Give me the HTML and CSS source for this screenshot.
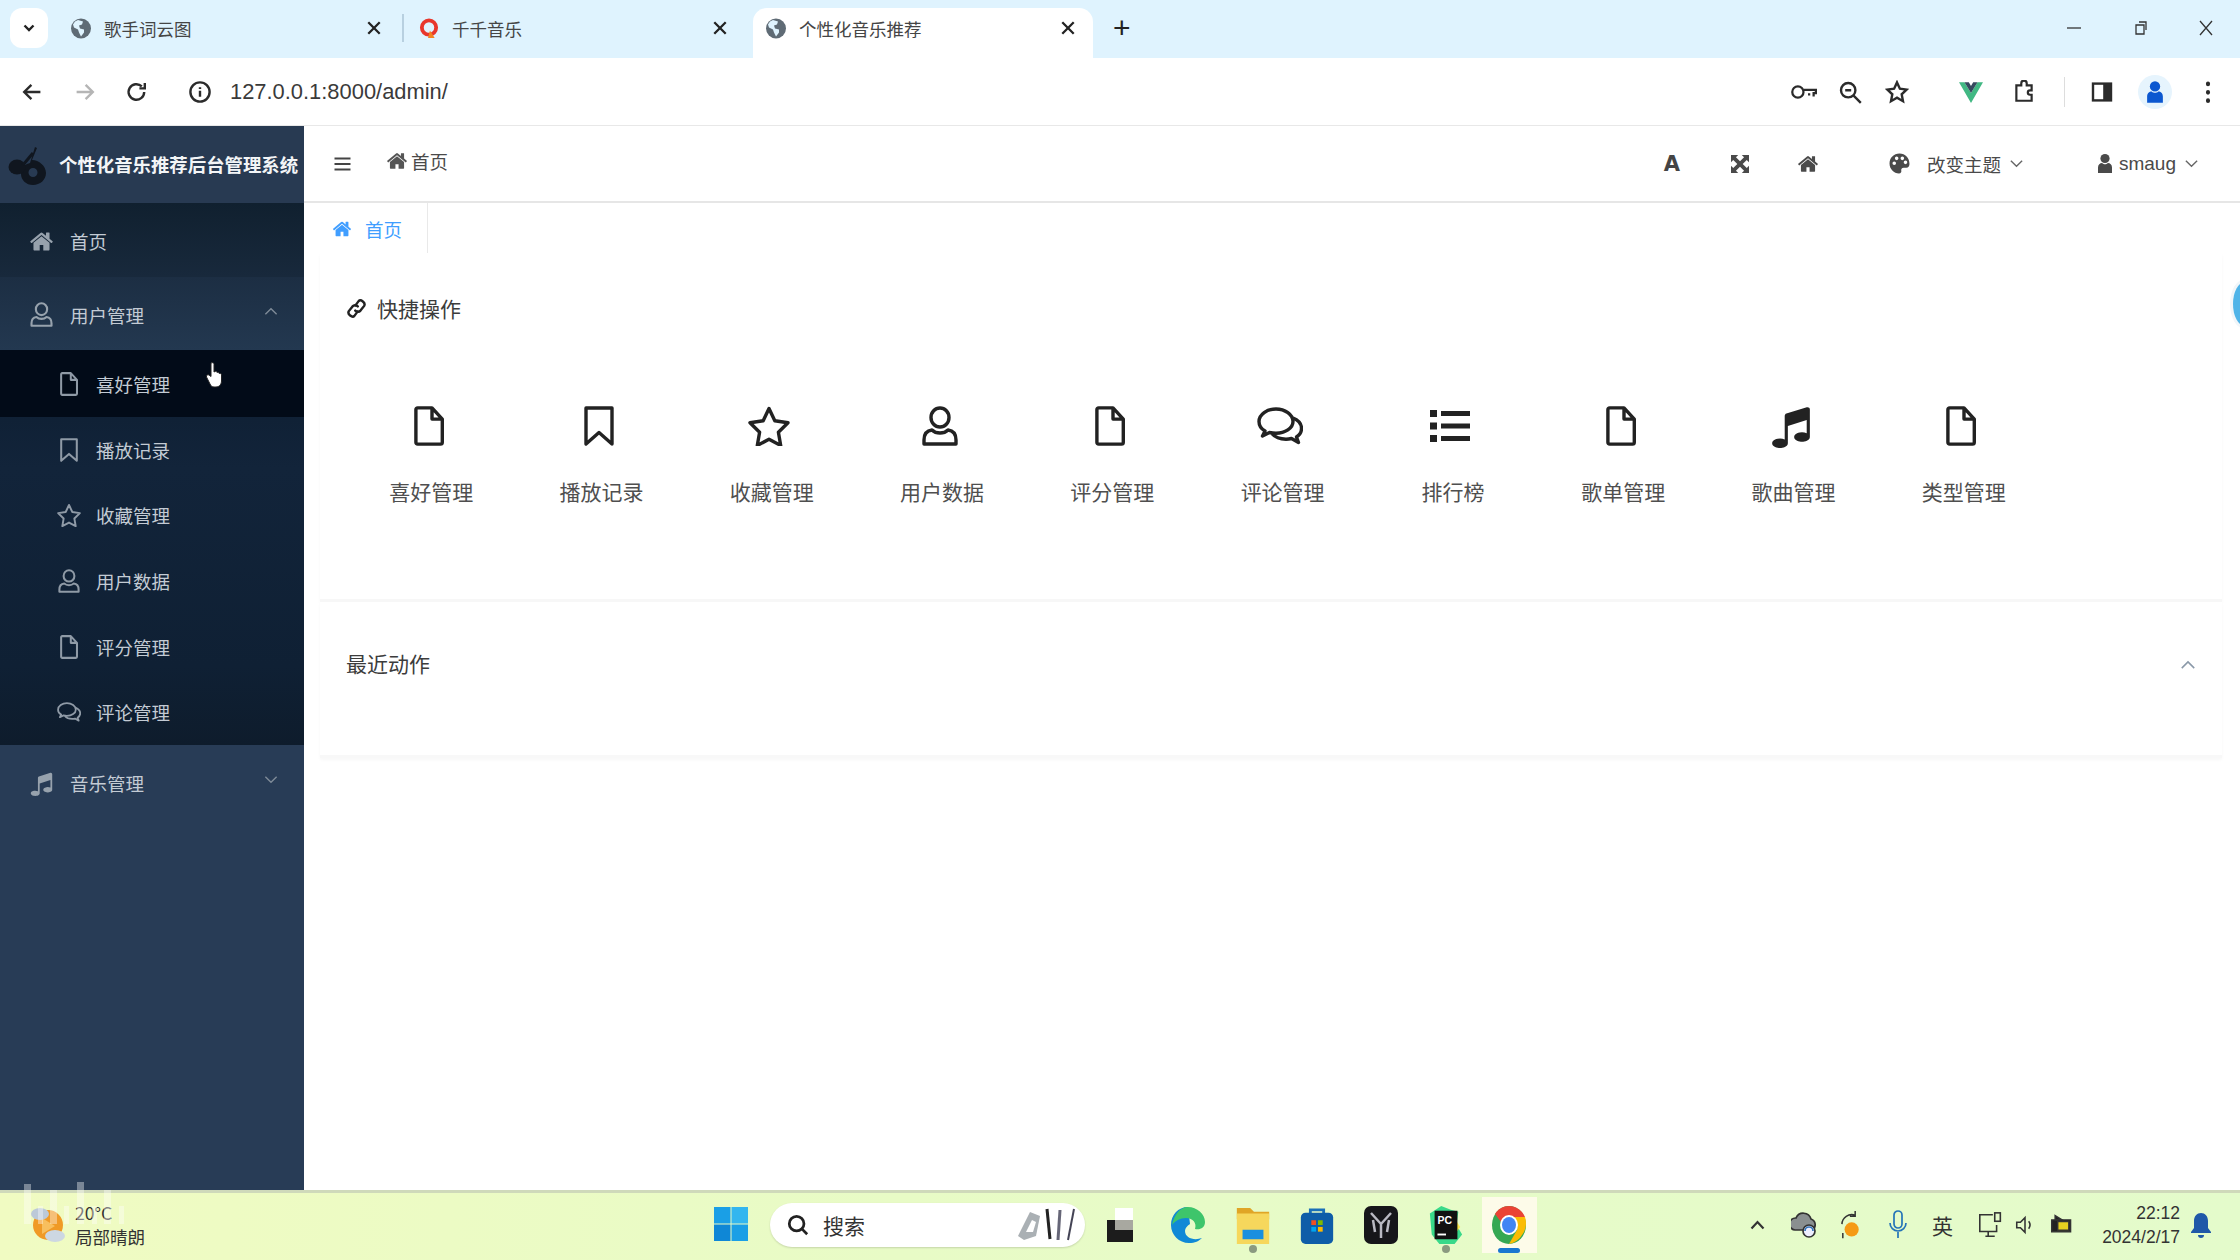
FILE: index.html
```html
<!DOCTYPE html>
<html lang="zh-CN">
<head>
<meta charset="utf-8">
<title>个性化音乐推荐</title>
<link rel="stylesheet" href="styles.css">
</head>
<body>
<svg class="defs" aria-hidden="true">
  <symbol id="i-home" viewBox="0 0 1792 1792"><path fill="currentColor" d="M1472 992v480q0 26-19 45t-45 19h-384v-384h-256v384h-384q-26 0-45-19t-19-45v-480q0-1 .5-3t.5-3l575-474 575 474q1 2 1 6zm223-69l-62 74q-8 9-21 11h-3q-13 0-21-7l-692-577-692 577q-12 8-24 7-13-2-21-11l-62-74q-8-10-7-23.500t11-21.500l719-599q32-26 76-26t76 26l244 204v-195q0-14 9-23t23-9h192q14 0 23 9t9 23v408l219 182q10 8 11 21.500t-7 23.500z"/></symbol>
  <symbol id="i-music" viewBox="0 0 1792 1792"><path fill="currentColor" d="M1664 224v1120q0 50-34 89t-86 60.500-103.500 32-96.500 10.500-96.500-10.500-103.500-32-86-60.500-34-89 34-89 86-60.500 103.500-32 96.500-10.500q105 0 192 39v-537l-768 237v709q0 50-34 89t-86 60.500-103.500 32-96.500 10.500-96.500-10.500-103.500-32-86-60.500-34-89 34-89 86-60.500 103.500-32 96.500-10.500q105 0 192 39v-967q0-31 19-56.500t49-35.500l832-256q12-4 28-4 40 0 68 28t28 68z"/></symbol>
  <symbol id="i-file" viewBox="0 0 30 40"><path fill="none" stroke="currentColor" stroke-width="3.4" stroke-linejoin="round" d="M3.700 1.900h14.300l10.300 11.200v23.200q0 1.800-1.800 1.800H3.700q-1.800 0-1.800-1.800V3.700q0-1.800 1.800-1.800zM18 1.900v11.200h10.300"/></symbol>
  <symbol id="i-bookmark" viewBox="0 0 30 40"><path fill="none" stroke="currentColor" stroke-width="3.400" stroke-linejoin="round" d="M2 2h26v36l-13-11.500L2 38z"/></symbol>
  <symbol id="i-star" viewBox="0 0 42 40"><path fill="none" stroke="currentColor" stroke-width="3.400" stroke-linejoin="round" d="M21 2.500l5.800 12.300 13.200 1.900-9.600 9.500 2.300 13.300L21 33.200 9.300 39.500l2.300-13.300L2 16.700l13.200-1.900z"/></symbol>
  <symbol id="i-user" viewBox="0 0 36 40"><g fill="none" stroke="currentColor" stroke-width="3.400"><ellipse cx="18" cy="11.500" rx="9" ry="9.500"/><path stroke-linejoin="round" d="M10 24q-8 1-8 10v4h32v-4q0-9-8-10-3 3-8 3t-8-3z"/></g></symbol>
  <symbol id="i-comments" viewBox="0 0 46 40"><g fill="none" stroke="currentColor" stroke-width="3.400" stroke-linejoin="round"><path d="M19 3C10 3 2 8.500 2 15.500c0 4 2.500 7.500 6 9.500l-2.500 5 7-3.500c2 .5 4 .8 6.500 .8 9 0 17-5 17-11.800S28 3 19 3z"/><path d="M36 12c5 2 8.500 5.800 8.500 10.500 0 3.500-2 6.500-5 8.500l2 5.500-7-4c-2 .5-3.500 .7-5.500 .7-6 0-11-2-14-5.500"/></g></symbol>
  <symbol id="i-list" viewBox="0 0 40 32"><path fill="currentColor" d="M0 0h7v7H0zM11 1h29v5H11zM0 12.500h7v7H0zM11 13.500h29v5H11zM0 25h7v7H0zM11 26h29v5H11z"/></symbol>
  <symbol id="i-link" viewBox="0 0 20 20"><g fill="none" stroke="currentColor" stroke-width="2.300" stroke-linecap="round"><path d="M9 7l3-4c2-2.200 7 1.500 5.300 4.500l-3.500 4.500c-1.500 1.700-3.800 1.200-5 0"/><path d="M11 13l-3 4c-2 2.200-7-1.500-5.300-4.500L6.200 8c1.500-1.700 3.800-1.200 5 0"/></g></symbol>
  <symbol id="i-expand" viewBox="0 0 20 20"><path fill="currentColor" d="M0 0h8L5.500 2.500 10 7l4.500-4.500L12 0h8v8l-2.500-2.500L13 10l4.500 4.500L20 12v8h-8l2.500-2.500L10 13l-4.500 4.500L8 20H0v-8l2.500 2.500L7 10 2.500 5.500 0 8z"/></symbol>
  <symbol id="i-palette" viewBox="0 0 20 20"><path fill="currentColor" fill-rule="evenodd" d="M10 .5C4.500 .5 .5 4.700 .5 10s4.200 9.500 9 9.500c1.800 0 2.500-1.200 2.200-2.500-.4-1.500.4-3 2.300-3h2.500c1.800 0 3-1.300 3-3.500C19.500 4.500 15.500 .5 10 .5zM5 11.500a1.700 1.700 0 1 1 0-3.400 1.700 1.700 0 0 1 0 3.400zm2.300-4.700a1.700 1.700 0 1 1 0-3.400 1.700 1.700 0 0 1 0 3.400zm5.400 0a1.700 1.700 0 1 1 0-3.400 1.700 1.700 0 0 1 0 3.400zm3 3.800a1.700 1.700 0 1 1 0-3.400 1.700 1.700 0 0 1 0 3.400z"/></symbol>
  <symbol id="i-person" viewBox="0 0 16 20"><circle cx="8" cy="5" r="4.600" fill="currentColor"/><path fill="currentColor" d="M1 19.500v-5.500c0-3 2-4.500 4-4.500 1 1 2 1.200 3 1.200s2-.2 3-1.200c2 0 4 1.500 4 4.500v5.500z"/></symbol>
  <symbol id="i-globe" viewBox="0 0 20 20"><circle cx="10" cy="10" r="10" fill="#5f6b75"/><path fill="#dff3fe" d="M7 1.500l5 1.500-1 3-3 1 1 3 4 1v3l-3 4-2-4-1-3-4-2-1-3 2-3z"/></symbol>
</svg>

<header class="tabstrip">
  <button class="tab-search"><svg class="chev" viewBox="0 0 12 8"><path d="M1.500 1.500L6 6l4.500-4.500"/></svg></button>
  <div class="tab tab-first"><svg class="tab-ico"><use href="#i-globe"/></svg><span class="tab-title">歌手词云图</span><svg class="tab-x" viewBox="0 0 14 14"><path d="M2 2l10 10M12 2L2 12"/></svg></div>
  <i class="tab-sep"></i>
  <div class="tab tab-second">
    <svg class="tab-ico" viewBox="0 0 20 22"><circle cx="10" cy="10" r="7.500" fill="none" stroke="#e8362c" stroke-width="4"/><path d="M11 13l5 8h-7z" fill="#f58220"/></svg>
    <span class="tab-title">千千音乐</span><svg class="tab-x" viewBox="0 0 14 14"><path d="M2 2l10 10M12 2L2 12"/></svg></div>
  <div class="tab tab-active"><svg class="tab-ico"><use href="#i-globe"/></svg><span class="tab-title">个性化音乐推荐</span><svg class="tab-x" viewBox="0 0 14 14"><path d="M2 2l10 10M12 2L2 12"/></svg></div>
  <span class="tab-new">+</span>
  <div class="winctl">
    <svg class="win-min" viewBox="0 0 16 16"><path d="M1 8h14"/></svg>
    <svg viewBox="0 0 16 16"><path d="M3 5h8v9H3zM6 2h7v8"/></svg>
    <svg viewBox="0 0 16 16"><path d="M2 1l12 14M14 1L2 15"/></svg>
  </div>
</header>

<nav class="toolbar">
  <span class="tb"><svg viewBox="0 0 20 20"><path d="M17 10H4M9.500 4L3.500 10l6 6"/></svg></span>
  <span class="tb tb-off"><svg viewBox="0 0 20 20"><path d="M3 10h13M10.500 4l6 6-6 6"/></svg></span>
  <span class="tb"><svg viewBox="0 0 20 20"><path d="M16 10a6.500 6.500 0 1 1-2-4.700M16.500 2.500v4.500H12"/></svg></span>
  <span class="tb tb-info"><svg viewBox="0 0 20 20"><circle cx="10" cy="10" r="8"/><path d="M10 9v5M10 6v1.500"/></svg></span>
  <span class="url">127.0.0.1:8000/admin/</span>
  <div class="tb-right">
    <span class="tb tb-key"><svg viewBox="0 0 24 20"><circle cx="7" cy="10" r="5"/><path d="M12 8h11v3h-2v3M17 11v2"/></svg></span>
    <span class="tb tb-tight"><svg viewBox="0 0 20 20"><circle cx="8.500" cy="8.500" r="6"/><path d="M13 13l6 6M6 8.500h5"/></svg></span>
    <span class="tb tb-tight"><svg viewBox="0 0 20 20"><path d="M10 2l2.400 5.300 5.600 .7-4.100 3.900 1.100 5.800-5-2.900-5 2.900 1.100-5.800L2 8l5.600-.7z"/></svg></span>
    <span class="tb tb-vue"><svg viewBox="0 0 22 20"><path fill="#41b883" stroke="none" d="M0 1h5l6 10 6-10h5L11 20z"/><path fill="#35495e" stroke="none" d="M5 1h4l2 3.500L13 1h4l-6 10z"/></svg></span>
    <span class="tb tb-near"><svg viewBox="0 0 20 22"><path d="M3 5h4.500V3a2.500 2.500 0 0 1 5 0v2H17v4.500h-1.500a2 2 0 0 0 0 4H17V19H3z"/></svg></span>
    <i class="tb-sep"></i>
    <span class="tb tb-panel"><svg viewBox="0 0 20 20"><rect x="2.500" y="3" width="15" height="14" /><path class="solid" d="M11 3h6.500v14H11z"/></svg></span>
    <span class="tb tb-near"><span class="avatar"><svg viewBox="0 0 16 20"><use href="#i-person"/></svg></span></span>
    <span class="tb tb-near"><svg viewBox="0 0 20 20"><path class="dots" d="M10 3v.5M10 10v.5M10 17v.5"/></svg></span>
  </div>
</nav>

<div class="app">
  <aside class="sidebar">
    <div class="brand">
      <svg class="brand-logo" viewBox="0 0 38 38"><path fill="#10161f" fill-rule="evenodd" d="M27 0l2 1-5 12c7 0 14 6 14 13 0 7-6 12-13 12s-12-5-12-11c0-4 2-8 6-10l3-1zM25 21a4.500 4.500 0 1 0 0 9 4.500 4.500 0 0 0 0-9z"/><ellipse cx="9" cy="20" rx="8.500" ry="7.500" fill="#10161f"/><path stroke="#10161f" stroke-width="3" d="M15 18l10-12"/></svg>
      <span class="brand-title">个性化音乐推荐后台管理系统</span>
    </div>
    <a class="menu menu-home"><svg class="m-ico"><use href="#i-home"/></svg><span>首页</span></a>
    <a class="menu menu-open"><svg class="m-ico"><use href="#i-user"/></svg><span>用户管理</span><svg class="m-arrow" viewBox="0 0 12 8"><path d="M1 6.500L6 1.500l5 5"/></svg></a>
    <div class="submenu">
      <a class="sub sub-active"><svg class="s-ico"><use href="#i-file"/></svg><span>喜好管理</span></a>
      <a class="sub"><svg class="s-ico"><use href="#i-bookmark"/></svg><span>播放记录</span></a>
      <a class="sub"><svg class="s-ico"><use href="#i-star"/></svg><span>收藏管理</span></a>
      <a class="sub"><svg class="s-ico"><use href="#i-user"/></svg><span>用户数据</span></a>
      <a class="sub"><svg class="s-ico"><use href="#i-file"/></svg><span>评分管理</span></a>
      <a class="sub"><svg class="s-ico"><use href="#i-comments"/></svg><span>评论管理</span></a>
    </div>
    <a class="menu menu-music"><svg class="m-ico"><use href="#i-music"/></svg><span>音乐管理</span><svg class="m-arrow" viewBox="0 0 12 8"><path d="M1 1.500L6 6.500l5-5"/></svg></a>
  </aside>

  <div class="main">
    <div class="navbar">
      <svg class="burger" viewBox="0 0 16 14"><path d="M0 1.500h16M0 7h16M0 12.500h16"/></svg>
      <div class="crumb"><svg class="crumb-ico"><use href="#i-home"/></svg><span>首页</span></div>
      <div class="nav-right">
        <span class="nav-a">A</span>
        <svg class="nav-ico nav-expand"><use href="#i-expand"/></svg>
        <svg class="nav-ico nav-home"><use href="#i-home"/></svg>
        <svg class="nav-ico nav-palette"><use href="#i-palette"/></svg>
        <span class="nav-text nav-theme">改变主题</span>
        <svg class="nav-chev" viewBox="0 0 12 8"><path d="M1 1.500L6 6.500l5-5"/></svg>
        <svg class="nav-person"><use href="#i-person"/></svg>
        <span class="nav-text nav-user">smaug</span>
        <svg class="nav-chev" viewBox="0 0 12 8"><path d="M1 1.500L6 6.500l5-5"/></svg>
      </div>
    </div>
    <div class="tagsbar"><div class="tag"><svg class="tag-ico"><use href="#i-home"/></svg><span>首页</span></div></div>

    <section class="card card-quick">
      <h2 class="card-title"><svg class="title-ico"><use href="#i-link"/></svg>快捷操作</h2>
      <div class="shortcuts">
        <a class="sc"><svg class="sc-ico w30"><use href="#i-file"/></svg><span>喜好管理</span></a>
        <a class="sc"><svg class="sc-ico w30"><use href="#i-bookmark"/></svg><span>播放记录</span></a>
        <a class="sc"><svg class="sc-ico w42"><use href="#i-star"/></svg><span>收藏管理</span></a>
        <a class="sc"><svg class="sc-ico w36"><use href="#i-user"/></svg><span>用户数据</span></a>
        <a class="sc"><svg class="sc-ico w30"><use href="#i-file"/></svg><span>评分管理</span></a>
        <a class="sc"><svg class="sc-ico w46"><use href="#i-comments"/></svg><span>评论管理</span></a>
        <a class="sc"><svg class="sc-ico w40"><use href="#i-list"/></svg><span>排行榜</span></a>
        <a class="sc"><svg class="sc-ico w30"><use href="#i-file"/></svg><span>歌单管理</span></a>
        <a class="sc"><svg class="sc-ico w40 music"><use href="#i-music"/></svg><span>歌曲管理</span></a>
        <a class="sc"><svg class="sc-ico w30"><use href="#i-file"/></svg><span>类型管理</span></a>
      </div>
    </section>
    <section class="card card-recent">
      <h2 class="card-title">最近动作</h2>
      <svg class="card-chev" viewBox="0 0 12 8"><path d="M1 6.500L6 1.500l5 5"/></svg>
    </section>
    <div class="edge-dot"></div>
  </div>
</div>

<svg class="cursor" viewBox="0 0 20 28"><path fill="#fff" stroke="#222" stroke-width="1" d="M6 2c1.500-1 3 0 3 1.500V11l1-.5c1-.5 2 0 2 1 1-.5 2 0 2.200 1 1-.5 2.300 0 2.300 1.500v6c0 3-2 6-5.500 6H9c-2 0-3-1-4-3L1.500 16c-.5-1.500 1-3 2.500-2L6 15.500z"/></svg>

<footer class="taskbar">
  <div class="weather">
    <svg class="weather-ico" viewBox="0 0 36 40"><circle cx="18" cy="20" r="15" fill="#f09a26"/><path fill="#f8bf5e" d="M12 13l13 8-13 8z"/><ellipse cx="10" cy="9" rx="9" ry="6" fill="#bcc9d8"/><ellipse cx="25" cy="31" rx="10" ry="6" fill="#cdd7e2"/></svg>
    <div class="weather-text"><span>20°C</span><span>局部晴朗</span></div>
  </div>
  <svg class="start" viewBox="0 0 34 34"><rect width="16.500" height="16.500" fill="#1a9fe6"/><rect x="17.500" width="16.500" height="16.500" fill="#33b6ef"/><rect y="17.500" width="16.500" height="16.500" fill="#0f87d6"/><rect x="17.500" y="17.500" width="16.500" height="16.500" fill="#1a9fe6"/></svg>
  <div class="search">
    <svg class="search-ico" viewBox="0 0 24 24"><circle cx="10.500" cy="10.500" r="8"/><path d="M16.500 16.500L22 22"/></svg>
    <span>搜索</span>
    <svg class="search-deco" viewBox="0 0 64 34"><path fill="#aab0b4" d="M4 28L16 4l10 4-4 20-12 4z"/><path fill="#fff" d="M12 24l6-12 4 2-3 10z"/><path stroke="#222" stroke-width="3" d="M33 1l3 30"/><path stroke="#667" stroke-width="3" d="M46 2l-2 30"/><path stroke="#445" stroke-width="2" d="M60 1l-6 31"/></svg>
  </div>
  <div class="apps">
    <span class="app-slot app-slot-first"><svg viewBox="0 0 26 34"><path fill="#1c1c1c" d="M0 12h26v22H0z"/><path fill="#fff" d="M8 0h18v22H8z"/><path fill="#a8a8a0" d="M8 12h18v10H8z"/></svg></span>
    <span class="app-slot"><svg viewBox="0 0 34 36"><path fill="#1089d6" d="M17 0C7 0 0 8 0 18c0 10 8 18 18 18 6 0 10-2 13-5-8 3-17 0-17-7 0-3 2-5 5-7z"/><path fill="#3ec56b" d="M17 0c9 0 17 7 17 15 0 6-5 8-10 7 2-6-2-11-9-11-6 0-11 3-14 7C3 8 9 0 17 0z"/></svg></span>
    <span class="app-slot"><svg viewBox="0 0 34 40"><path fill="#e0a526" d="M0 2h14l4 4h16v8H0z"/><path fill="#f6d75c" d="M0 8h34v32H0z"/><path fill="#1a8fdf" d="M6 25h22v10H6z"/></svg><i class="dot"></i></span>
    <span class="app-slot"><svg viewBox="0 0 34 40"><path fill="none" stroke="#1a6fb8" stroke-width="3" d="M10 8V4h14v4"/><rect y="7" width="34" height="33" rx="5" fill="#0e5da8"/><path fill="#f25022" d="M11 15h5v5h-5z"/><path fill="#7fba00" d="M18 15h5v5h-5z"/><path fill="#00a4ef" d="M11 22h5v5h-5z"/><path fill="#ffb900" d="M18 22h5v5h-5z"/></svg></span>
    <span class="app-slot"><svg viewBox="0 0 34 38"><rect width="34" height="38" rx="7" fill="#16161a"/><path fill="none" stroke="#b9b9c2" stroke-width="2.500" d="M7 7l10 11 10-11M17 18v14M9 14l2 12M25 14l-2 12"/></svg></span>
    <span class="app-slot"><svg viewBox="0 0 34 40"><path fill="#39d98a" d="M0 8L12 0l10 4 8 2-2 14 6 10-8 10H10L2 30z"/><path fill="#fce94f" d="M24 10l8 12-6 8z"/><rect x="5" y="5" width="24" height="30" fill="#111"/><text x="8" y="19" class="pc">PC</text><path stroke="#fff" stroke-width="2" d="M8 30h9"/></svg><i class="dot"></i></span>
    <span class="app-slot app-active"><svg viewBox="0 0 34 38"><ellipse cx="17" cy="19" rx="17" ry="19" fill="#35a853"/><path fill="#ea4335" d="M3 8C6 3 11 0 17 0c7 0 13 4 16 11H17c-4 0-7 2-8 5z"/><path fill="#fbbc04" d="M33 11c2 6 1 13-3 18-3 5-8 8-13 9l8-14c1-4 0-8-3-13z"/><ellipse cx="17" cy="19" rx="9" ry="10" fill="#fff"/><ellipse cx="17" cy="19" rx="7" ry="8" fill="#4285f4"/></svg><i class="bar"></i></span>
  </div>
  <div class="tray">
    <svg class="tr tr-up" viewBox="0 0 16 10"><path d="M2 8.500L8 2l6 6.500"/></svg>
    <svg class="tr tr-cloud" viewBox="0 0 26 30"><path fill="#8a8f90" d="M4 20a6 6 0 0 1 1-12 8 8 0 0 1 15 1 6 6 0 0 1 1 11z"/><circle cx="18" cy="21" r="6" fill="#eef"/><path d="M14 21a4 4 0 0 1 8 0" stroke="#3574b8"/></svg>
    <svg class="tr tr-sync" viewBox="0 0 26 34"><path d="M20 6a11 11 0 0 0-15 10M20 1v6h-6M6 26v6"/><circle cx="16" cy="22" r="8" fill="#f59a14" stroke="none"/></svg>
    <svg class="tr tr-mic" viewBox="0 0 20 30"><rect x="6" y="1" width="8" height="17" rx="4" stroke="#2474b8"/><path stroke="#2474b8" d="M2 13a8 8 0 0 0 16 0M10 22v6"/></svg>
    <span class="tr-lang">英</span>
    <svg class="tr tr-net" viewBox="0 0 28 30"><path d="M16 4H2v18h18v-7M8 27h10M11 22v5"/><rect x="18" y="2" width="6" height="9"/></svg>
    <svg class="tr tr-vol" viewBox="0 0 24 24"><path d="M3 9h4l5-5v16l-5-5H3z"/><path d="M16 8q3 4 0 8"/></svg>
    <svg class="tr tr-bat" viewBox="0 0 28 26"><path fill="#222" d="M2 7h22v14H2z"/><path fill="#e6d020" d="M9 9h13v10H9z"/><path fill="#222" d="M6 2l8 5H6z"/></svg>
    <div class="clock"><span>22:12</span><span>2024/2/17</span></div>
    <svg class="tr-bell" viewBox="0 0 20 26"><path fill="#1f58a8" d="M10 1c-4 0-7 3-7 8v7l-3 4v1h20v-1l-3-4V9c0-5-3-8-7-8zM7 23h6a3 3 0 0 1-6 0z"/></svg>
  </div>
</footer>
<svg class="ghost" viewBox="0 0 110 46"><path fill="#fff" opacity=".38" d="M2 2h7v40H2zM28 8h7v34h-7zM55 0h7v42h-7zM82 8h7v34h-7zM16 24h5v18h-5zM42 24h5v18h-5zM70 24h5v18h-5zM97 24h5v18h-5z"/></svg>
</body>
</html>
```

FILE: styles.css
```css
* { box-sizing: border-box; }
html, body { margin: 0; padding: 0; }
body {
  width: 2240px; height: 1260px; overflow: hidden;
  display: flex; flex-direction: column; position: relative;
  font-family: "Noto Sans CJK SC", "Liberation Sans", sans-serif;
  color: #333; background: #fff;
}
.defs { width: 0; height: 0; position: absolute; }
a { display: flex; align-items: center; }
svg { display: block; flex: none; }

/* tab strip */
.tabstrip { height: 58px; flex: none; background: #dff3fe; display: flex; align-items: flex-start; position: relative; }
.tab-search { width: 38px; height: 40px; margin: 8px 0 0 10px; border: 0; padding: 0; border-radius: 12px; background: #fff; display: flex; align-items: center; justify-content: center; }
.chev { width: 12px; height: 8px; fill: none; stroke: #222; stroke-width: 2.4; }
.tab { height: 50px; margin-top: 8px; padding-bottom: 10px; display: flex; align-items: center; font-size: 17.500px; color: #454545; }
.tab-first { width: 354px; padding-left: 23px; }
.tab-second { width: 348px; padding-left: 15px; }
.tab-active { width: 340px; background: #fff; border-radius: 14px 14px 0 0; padding-left: 13px; margin-left: 1px; }
.tab-ico { width: 20px; height: 21px; }
.tab-title { margin-left: 13px; flex: 1; }
.tab-x { width: 16px; height: 16px; fill: none; stroke: #222; stroke-width: 2; }
.tab-first .tab-x { margin-right: 20px; }
.tab-second .tab-x { margin-right: 24px; }
.tab-active .tab-x { margin-right: 17px; }
.tab-sep { width: 2px; height: 28px; margin: 14px 0 0 0; background: #b8d0e0; }
.tab-new { font-size: 30px; line-height: 40px; margin: 8px 0 0 20px; color: #222; font-family: "Liberation Sans", sans-serif; }
.winctl { margin-left: auto; align-self: flex-start; margin-top: 20px; display: flex; gap: 49px; padding-right: 26px; }
.winctl svg { width: 16px; height: 16px; fill: none; stroke: #333; stroke-width: 1.300; }
.winctl .win-min { margin-right: 2px; }

/* toolbar */
.toolbar { height: 68px; flex: none; background: #fff; display: flex; align-items: center; padding-left: 6px; border-bottom: 1px solid #e8e8e8; border-radius: 10px 10px 0 0; }
.tb { width: 52.500px; height: 40px; display: flex; align-items: center; justify-content: center; }
.tb svg { width: 24px; height: 24px; fill: none; stroke: #2b2b2b; stroke-width: 2; }
.tb-off svg { stroke: #b5b5b5; }
.tb-info { margin-left: 10px; }
.url { font-family: "Liberation Sans", sans-serif; font-size: 21.900px; color: #3a3a3a; margin-left: 4px; }
.tb-right { margin-left: auto; display: flex; align-items: center; padding-right: 9px; }
.tb-right .tb { width: 46px; }
.tb-right .tb-vue { margin-left: 28px; }
.tb-right .tb-tight { margin-left: 1px; }
.tb-right .tb-near { margin-left: 7px; }
.tb-right .tb-key svg { width: 27px; height: 24px; }
.tb-sep { width: 1px; height: 30px; background: #ddd; margin: 0 14px 0 17px; }
.tb-panel .solid { fill: #2b2b2b; stroke: none; }
.avatar { color: #0b57d0; width: 34px; height: 34px; border-radius: 50%; background: #e6f4fd; display: flex; align-items: center; justify-content: center; }
.tb .avatar svg { width: 18px; height: 24px; stroke: none; fill: currentColor; }
.tb .dots { stroke-width: 3.400; stroke-linecap: round; }

/* app layout */
.app { flex: 1; display: flex; min-height: 0; }
.sidebar { width: 304px; flex: none; background: #283c56; color: #c3cbd4; display: flex; flex-direction: column; }
.brand { height: 77px; flex: none; display: flex; align-items: center; padding: 0 0 2px 8px; background: #283a52; overflow: hidden; }
.brand-logo { width: 38px; height: 38px; margin-top: 4px; }
.brand-title { font-size: 18.400px; font-weight: 700; color: #f3f5f7; margin-left: 13px; white-space: nowrap; }
.menu { flex: none; height: 74px; padding-left: 29px; font-size: 18.500px; position: relative; }
.menu-home { background: linear-gradient(#10202f, #18293c); padding-top: 2px; }
.menu-open { height: 73px; background: linear-gradient(#1c2e43, #233850); padding-top: 2px; }
.menu-music { height: 77px; background: #283c56; }
.m-ico { width: 25px; height: 25px; color: #97a2ad; margin-right: 16px; }
.m-arrow { position: absolute; right: 26px; top: 30px; width: 14px; height: 9px; fill: none; stroke: #7f8b98; stroke-width: 1.200; }
.submenu { flex: none; background: linear-gradient(#0d1d30, #12243a 30%, #0f2034 80%, #0e1c2c); }
.sub { height: 65.600px; padding-left: 57px; font-size: 18.500px; }
.sub-active { height: 67px; background: #020b18; }
.s-ico { width: 24px; height: 24px; color: #8f9aa6; margin-right: 15px; }

/* navbar */
.main { flex: 1; min-width: 0; position: relative; background: #fff; display: flex; flex-direction: column; }
.navbar { height: 77px; flex: none; display: flex; align-items: center; border-bottom: 2px solid #e6e6e6; padding-left: 30px; font-size: 18.500px; color: #4a4a4a; }
.burger { width: 17px; height: 14px; fill: none; stroke: #444; stroke-width: 2.200; }
.crumb { display: flex; align-items: center; margin: -6px 0 0 35px; }
.crumb-ico { width: 22px; height: 22px; color: #555; margin-right: 3px; }
.nav-right { margin-left: auto; display: flex; align-items: center; padding-right: 41px; color: #4a4a4a; }
.nav-a { font-family: "DejaVu Sans", sans-serif; font-weight: 700; font-size: 21px; width: 18px; text-align: center; color: #444; }
.nav-ico { color: #4a4a4a; }
.nav-expand { width: 18px; height: 18px; margin-left: 50px; }
.nav-home { width: 22px; height: 22px; margin-left: 48px; }
.nav-palette { width: 21px; height: 21px; margin-left: 70px; }
.nav-theme { margin-left: 17px; }
.nav-chev { width: 15px; height: 9px; margin-left: 8px; fill: none; stroke: #666; stroke-width: 1.200; }
.nav-person { width: 16px; height: 21px; margin-left: 73px; }
.nav-user { margin-left: 6px; font-family: "Liberation Sans", sans-serif; font-size: 19px; }

/* tag bar */
.tagsbar { height: 50px; flex: none; display: flex; }
.tag { display: flex; align-items: center; height: 50px; padding: 2px 25px 0 28px; border-right: 1px solid #e9e9e9; color: #409eff; font-size: 18.500px; }
.tag-ico { width: 20px; height: 20px; margin-right: 13px; }

/* cards */
.card { margin: 0 18px 0 16px; position: relative; background: #fff; box-shadow: 0 2px 3px rgba(0,0,0,.03); }
.card-quick { height: 349px; padding: 40px 0 0 26px; border-bottom: 3px solid #f7f7f7; }
.card-recent { height: 156px; padding: 46px 0 0 26px; border-bottom: 3px solid #f8f8f8; }
.card-title { margin: 0; font-size: 21px; font-weight: 400; line-height: 30px; display: flex; align-items: center; color: #3c3c3c; }
.title-ico { width: 21px; height: 21px; margin-right: 10px; color: #222; }
.shortcuts { display: grid; grid-template-columns: repeat(10, 170.300px); margin-top: 83px; }
.sc { flex-direction: column; color: #4f4f4f; font-size: 21px; line-height: 30px; }
.sc-ico { height: 40px; color: #222; margin: 0 5px 30px 0; }
.w30 { width: 30px; }
.w36 { width: 36px; }
.w40 { width: 40px; }
.w42 { width: 42px; }
.w46 { width: 46px; }
.sc-ico.music { height: 44px; width: 44px; margin-top: -2px; margin-bottom: 28px; }
.card-chev { position: absolute; right: 26px; top: 58px; width: 16px; height: 10px; fill: none; stroke: #8a99a8; stroke-width: 1.200; }
.edge-dot { position: absolute; right: -17px; top: 156px; width: 24px; height: 44px; border-radius: 50%; background: #4fb4e8; box-shadow: 0 0 0 3px #f1f6f9; }

.cursor { position: absolute; left: 205px; top: 361px; width: 20px; height: 28px; }
.ghost { position: absolute; left: 22px; top: 1182px; width: 110px; height: 46px; }

/* taskbar */
.taskbar { height: 70px; flex: none; background: linear-gradient(90deg, #f0fbc2, #e8fbc6 40%, #e4fbcb); border-top: 3px solid #cfd9ba; display: flex; align-items: center; position: relative; padding-bottom: 3px; }
.weather { width: 713px; flex: none; display: flex; align-items: center; padding-left: 30px; }
.weather-ico { width: 36px; height: 40px; }
.weather-text { display: flex; flex-direction: column; margin-left: 9px; font-size: 17.500px; line-height: 24px; color: #333; }
.start { width: 34px; height: 34px; margin-top: -2px; margin-left: 1px; }
.search { width: 315px; height: 44px; margin-left: 22px; background: #fff; border-radius: 22px; display: flex; align-items: center; padding-left: 17px; font-size: 21px; color: #333; box-shadow: 0 1px 2px rgba(0,0,0,.15); }
.search-ico { width: 22px; height: 22px; fill: none; stroke: #222; stroke-width: 3; }
.search span { margin-left: 14px; }
.search-deco { width: 64px; height: 34px; margin-left: auto; margin-right: 7px; }
.apps { margin-left: 3px; display: flex; align-items: center; }
.app-slot { width: 64.300px; height: 56px; display: flex; align-items: center; justify-content: center; position: relative; }
.app-slot svg { width: 34px; height: 38px; }
.app-slot-first { margin-right: 4px; }
.app-slot-first svg { width: 26px; height: 34px; }
.app-active { width: 55px; margin: 0 4px; background: #fdfbe9; }
.dot { position: absolute; bottom: 0; left: 50%; margin-left: -4px; width: 8px; height: 8px; border-radius: 50%; background: #8a9a80; }
.bar { position: absolute; bottom: 0; left: 50%; margin-left: -11px; width: 22px; height: 5px; border-radius: 3px; background: #1878d0; }
.pc { font-family: "Liberation Sans", sans-serif; font-size: 11px; font-weight: 700; fill: #fff; }
.tray { margin-left: 219px; display: flex; align-items: center; position: absolute; left: 1530px; top: 0; height: 64px; }
.tr { fill: none; stroke: #333; stroke-width: 1.700; }
.tr-up { width: 17px; height: 10px; stroke-width: 2.200; }
.tr-cloud { width: 26px; height: 30px; margin-left: 25px; }
.tr-sync { width: 24px; height: 30px; margin-left: 20px; }
.tr-mic { width: 20px; height: 30px; margin-left: 27px; }
.tr-lang { font-size: 21px; margin-left: 24px; color: #333; }
.tr-net { width: 28px; height: 28px; margin-left: 24px; }
.tr-vol { width: 22px; height: 22px; margin-left: 9px; }
.tr-bat { width: 24px; height: 24px; margin-left: 14px; }
.clock { width: 108px; margin-left: -2px; display: flex; flex-direction: column; align-items: flex-end; font-size: 17.500px; line-height: 24px; color: #333; font-family: "Liberation Sans", sans-serif; }
.tr-bell { width: 20px; height: 26px; margin-left: 11px; }
```
